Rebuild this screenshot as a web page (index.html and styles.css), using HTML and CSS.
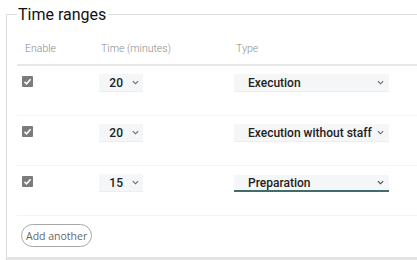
FILE: index.html
```html
<!DOCTYPE html>
<html lang="en">
<head>
    <meta charset="UTF-8">
    <meta name="viewport" content="width=device-width, initial-scale=1.0">
    <title>Time ranges</title>
    <link rel="stylesheet" href="styles.css">
</head>
<body>

<fieldset class="ranges">
    <legend>Time ranges</legend>
    <table class="ranges-table">
        <thead>
            <tr>
                <th class="col-enable">Enable</th>
                <th class="col-time">Time (minutes)</th>
                <th>Type</th>
            </tr>
        </thead>
        <tbody>
            <tr>
                <td><span class="check"><svg viewBox="0 0 11 11" width="11" height="11"><path d="M2.5 5.8 L4.6 7.8 L8.6 3.2" fill="none" stroke="#fff" stroke-width="1.6"/></svg></span></td>
                <td><div class="select select-time"><span>20</span><svg class="chev" viewBox="0 0 8 5" width="7" height="5"><path d="M1 1 L4 4 L7 1" fill="none" stroke="#666" stroke-width="1.3"/></svg></div></td>
                <td><div class="select select-type"><span>Execution</span><svg class="chev" viewBox="0 0 8 5" width="7" height="5"><path d="M1 1 L4 4 L7 1" fill="none" stroke="#666" stroke-width="1.3"/></svg></div></td>
            </tr>
            <tr>
                <td><span class="check"><svg viewBox="0 0 11 11" width="11" height="11"><path d="M2.5 5.8 L4.6 7.8 L8.6 3.2" fill="none" stroke="#fff" stroke-width="1.6"/></svg></span></td>
                <td><div class="select select-time"><span>20</span><svg class="chev" viewBox="0 0 8 5" width="7" height="5"><path d="M1 1 L4 4 L7 1" fill="none" stroke="#666" stroke-width="1.3"/></svg></div></td>
                <td><div class="select select-type"><span>Execution without staff</span><svg class="chev" viewBox="0 0 8 5" width="7" height="5"><path d="M1 1 L4 4 L7 1" fill="none" stroke="#666" stroke-width="1.3"/></svg></div></td>
            </tr>
            <tr>
                <td><span class="check"><svg viewBox="0 0 11 11" width="11" height="11"><path d="M2.5 5.8 L4.6 7.8 L8.6 3.2" fill="none" stroke="#fff" stroke-width="1.6"/></svg></span></td>
                <td><div class="select select-time"><span>15</span><svg class="chev" viewBox="0 0 8 5" width="7" height="5"><path d="M1 1 L4 4 L7 1" fill="none" stroke="#666" stroke-width="1.3"/></svg></div></td>
                <td><div class="select select-type focused"><span>Preparation</span><svg class="chev" viewBox="0 0 8 5" width="7" height="5"><path d="M1 1 L4 4 L7 1" fill="none" stroke="#444" stroke-width="1.3"/></svg></div></td>
            </tr>
        </tbody>
    </table>
    <button class="add-btn" type="button">Add another</button>
</fieldset>

</body>
</html>
```

FILE: styles.css
```css
body {
    font-family: Roboto, "Liberation Sans", sans-serif;
    background-color: #fff;
    margin: 0;
    overflow: hidden;
}

.ranges {
    margin: 5px 0 0 6px;
    padding: 0 0 8px 10px;
    width: 430px;
    height: 255px;
    box-sizing: border-box;
    border: 1px solid #dcdcdc;
    border-bottom: 3px solid #e4e4e4;
}

.ranges legend {
    font-size: 16px;
    color: #111;
    padding: 0 2px 0 1px;
}

.ranges-table {
    width: 100%;
    border-collapse: collapse;
    margin-top: 12px;
}

.ranges-table th {
    text-align: left;
    font-weight: 300;
    font-size: 10.5px;
    color: #8a8a8a;
    padding: 6px 8px 9px;
    border-bottom: 2px solid #e8e8e8;
}

.col-enable {
    width: 60px;
}

.col-time {
    width: 119px;
}

.ranges-table td {
    vertical-align: top;
    padding: 8px 6px 23px;
    border-bottom: 1px solid #f3f3f3;
}

.check {
    display: block;
    width: 11px;
    height: 11px;
    margin: 2px 0 0 -1px;
    background-color: #7b7b7b;
    border-radius: 1px;
}

.check svg {
    display: block;
}

.select {
    display: flex;
    align-items: center;
    height: 18px;
    background-color: #f5f6f7;
    border-bottom: 1px solid #eceef0;
    font-size: 12px;
    font-weight: 500;
    color: #222;
}

.select-time {
    width: 44px;
    justify-content: flex-end;
    padding-right: 4px;
    box-sizing: border-box;
}

.select-time span {
    margin-right: 9px;
}

.select-type {
    width: 155px;
    padding: 0 5px 0 14px;
    box-sizing: border-box;
    justify-content: space-between;
}

.select.focused {
    height: 17px;
    margin-top: 1px;
    border-bottom: 2px solid #3f6e6a;
}

.chev {
    display: block;
}

.add-btn {
    margin: 8px 0 0 4px;
    height: 23px;
    padding: 0 4px;
    border: 1px solid #a8a8a8;
    border-radius: 12px;
    background: #fff;
    color: #666;
    font-family: "Open Sans", sans-serif;
    font-size: 10.5px;
}
```
